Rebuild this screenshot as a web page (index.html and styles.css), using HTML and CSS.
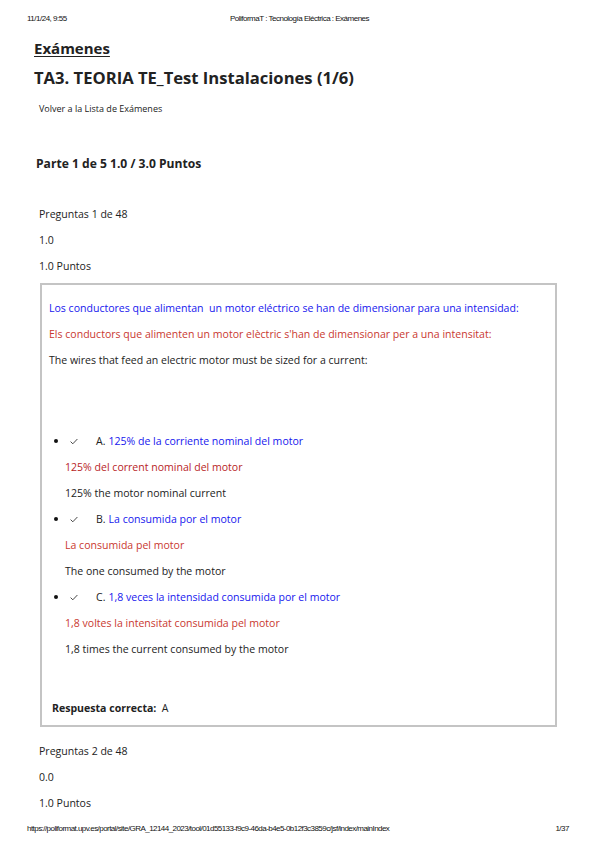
FILE: index.html
```html
<!DOCTYPE html>
<html lang="es">
<head>
    <meta charset="UTF-8">
    <meta name="viewport" content="width=device-width, initial-scale=1.0">
    <title>PoliformaT : Tecnología Eléctrica : Exámenes</title>
    <link rel="stylesheet" href="styles.css">
</head>
<body>
    <div class="print-header">
        <span>11/1/24, 9:55</span>
        <span class="print-title">PoliformaT : Tecnología Eléctrica : Exámenes</span>
        <span></span>
    </div>

    <div class="content">
        <h2 class="tool-title"><a href="#">Exámenes</a></h2>
        <h1 class="exam-title">TA3. TEORIA TE_Test Instalaciones (1/6)</h1>
        <p class="back-link">Volver a la Lista de Exámenes</p>

        <h3 class="part-title">Parte 1 de 5 1.0 / 3.0 Puntos</h3>

        <div class="question-info">
            <p>Preguntas 1 de 48</p>
            <p>1.0</p>
            <p>1.0 Puntos</p>
        </div>

        <div class="question-box">
            <p class="es">Los conductores que alimentan&nbsp; un motor eléctrico se han de dimensionar para una intensidad:</p>
            <p class="ca">Els conductors que alimenten un motor elèctric s'han de dimensionar per a una intensitat:</p>
            <p>The wires that feed an electric motor must be sized for a current:</p>

            <ul class="answers">
                <li>
                    <div class="answer-row">
                        <span class="dot"></span>
                        <svg class="check" width="8" height="7" viewBox="0 0 8 7"><polyline points="0.6,3.6 2.8,5.8 7.4,1" fill="none" stroke="#333" stroke-width="0.9"/></svg>
                        <span class="letter">A.</span>
                        <span class="es">125% de la corriente nominal del motor</span>
                    </div>
                    <p class="ca dark">125% del corrent nominal del motor</p>
                    <p>125% the motor nominal current</p>
                </li>
                <li>
                    <div class="answer-row">
                        <span class="dot"></span>
                        <svg class="check" width="8" height="7" viewBox="0 0 8 7"><polyline points="0.6,3.6 2.8,5.8 7.4,1" fill="none" stroke="#333" stroke-width="0.9"/></svg>
                        <span class="letter">B.</span>
                        <span class="es">La consumida por el motor</span>
                    </div>
                    <p class="ca">La consumida pel motor</p>
                    <p>The one consumed by the motor</p>
                </li>
                <li>
                    <div class="answer-row">
                        <span class="dot"></span>
                        <svg class="check" width="8" height="7" viewBox="0 0 8 7"><polyline points="0.6,3.6 2.8,5.8 7.4,1" fill="none" stroke="#333" stroke-width="0.9"/></svg>
                        <span class="letter">C.</span>
                        <span class="es">1,8 veces la intensidad consumida por el motor</span>
                    </div>
                    <p class="ca">1,8 voltes la intensitat consumida pel motor</p>
                    <p>1,8 times the current consumed by the motor</p>
                </li>
            </ul>

            <p class="correct"><b>Respuesta correcta:</b>&nbsp; A</p>
        </div>

        <div class="question-info after-box">
            <p>Preguntas 2 de 48</p>
            <p>0.0</p>
            <p>1.0 Puntos</p>
        </div>
    </div>

    <div class="print-footer">
        <span>https://poliformat.upv.es/portal/site/GRA_12144_2023/tool/01d55133-f9c9-46da-b4e5-0b12f3c3859c/jsf/index/mainIndex</span>
        <span>1/37</span>
    </div>
</body>
</html>
```

FILE: styles.css
```css
/* General styles */
* {
    margin: 0;
    padding: 0;
    box-sizing: border-box;
}

body {
    width: 599px;
    height: 848px;
    display: flex;
    flex-direction: column;
    font-family: "Open Sans", sans-serif;
    font-size: 10.55px;
    color: #222;
    background-color: #fff;
}

/* Browser print header / footer */
.print-header,
.print-footer {
    font-family: "Liberation Sans", Arial, sans-serif;
    font-size: 8px;
    letter-spacing: -0.5px;
    line-height: 12px;
    color: #111;
}

.print-header {
    display: grid;
    grid-template-columns: 1fr auto 1fr;
    padding: 13px 27px 0;
}

.print-footer {
    display: flex;
    justify-content: space-between;
    margin-top: auto;
    padding: 0 30px 13px 27px;
}

.print-footer span:first-child {
    letter-spacing: -0.55px;
}

/* Page content */
.content {
    padding-left: 34px;
    padding-right: 42px;
}

.tool-title {
    margin-top: 11px;
    font-size: 15px;
    line-height: 24px;
    font-weight: 700;
}

.tool-title a {
    color: #222;
    text-decoration: underline;
    text-decoration-thickness: 1px;
    text-underline-offset: 2px;
}

.exam-title {
    margin-top: 3px;
    font-size: 16.6px;
    line-height: 30px;
    font-weight: 700;
}

.back-link {
    margin-top: 6px;
    padding-left: 5px;
    font-size: 9px;
    line-height: 20px;
}

.part-title {
    margin-top: 35px;
    padding-left: 2px;
    font-size: 12.1px;
    line-height: 20px;
    font-weight: 700;
}

.question-info {
    margin-top: 27px;
    padding-left: 5px;
}

.question-info p {
    line-height: 26px;
}

.question-info.after-box {
    margin-top: 11px;
}

/* Question card */
.question-box {
    margin-top: 4px;
    margin-left: 6px;
    border: 2px solid #c4c4c4;
    padding: 10px 8px 4px 7px;
}

.question-box p {
    line-height: 26px;
}

.es {
    color: #1616ee;
}

.ca {
    color: #c9382f;
}

.ca.dark {
    color: #b8241f;
}

.answers {
    list-style: none;
    margin-top: 55px;
    margin-bottom: 33px;
}

.answers li p {
    padding-left: 16px;
}

.answer-row {
    display: flex;
    align-items: center;
    height: 26px;
}

.dot {
    width: 4px;
    height: 4px;
    border-radius: 50%;
    background-color: #111;
    margin-left: 5px;
}

.check {
    margin-left: 12px;
}

.letter {
    margin-left: 18px;
    margin-right: 3px;
}

.correct {
    padding-left: 3px;
}

.correct b {
    font-weight: 700;
}
```
